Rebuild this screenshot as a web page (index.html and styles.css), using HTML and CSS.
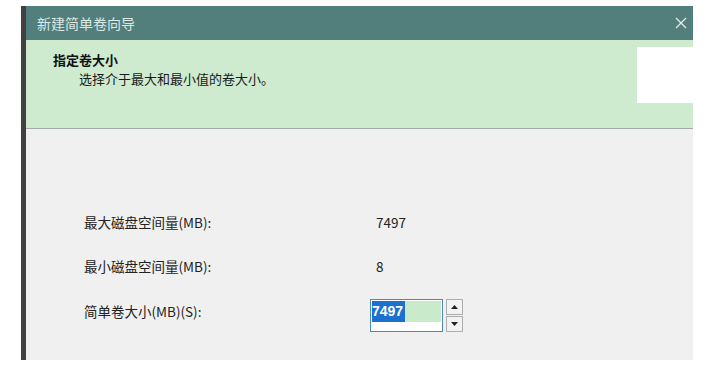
FILE: index.html
```html
<!DOCTYPE html>
<html lang="zh-CN">
<head>
<meta charset="utf-8">
<link rel="stylesheet" href="styles.css">
</head>
<body>
<div class="window">
  <div class="titlebar">
    <span class="title">新建简单卷向导</span>
    <svg class="close" width="12" height="12" viewBox="0 0 12 12"><path d="M1 1L11 11M11 1L1 11" stroke="#e3eeec" stroke-width="1.3" fill="none"/></svg>
  </div>
  <div class="header">
    <div class="htext">
      <div class="heading">指定卷大小</div>
      <div class="sub">选择介于最大和最小值的卷大小。</div>
    </div>
    <div class="logo"></div>
  </div>
  <div class="content">
    <div class="form">
      <div class="label">最大磁盘空间量(MB):</div>
      <div class="value">7497</div>
      <div class="label">最小磁盘空间量(MB):</div>
      <div class="value">8</div>
      <div class="label l3">简单卷大小(MB)(S):</div>
      <div class="spin">
        <div class="input">
          <div class="line"><span class="sel">7497</span><span class="fill"></span></div>
        </div>
        <div class="btns">
          <div class="btn"><svg width="7" height="4" viewBox="0 0 7 4"><path d="M0 4L3.5 0L7 4Z" fill="#222"/></svg></div>
          <div class="btn"><svg width="7" height="4" viewBox="0 0 7 4"><path d="M0 0L3.5 4L7 0Z" fill="#222"/></svg></div>
        </div>
      </div>
    </div>
  </div>
</div>
</body>
</html>
```
FILE: styles.css
```css
html, body { margin: 0; padding: 0; background: #fff; }
body {
  font-family: "Noto Sans CJK SC", "Microsoft YaHei", sans-serif;
  width: 707px; height: 380px; overflow: hidden;
}
.window {
  margin: 6px 0 0 21px;
  width: 667px;
  height: 354px;
  border-left: 5px solid #414141;
  display: flex;
  flex-direction: column;
}
.titlebar {
  height: 34px;
  background: #527e7b;
  display: flex;
  align-items: center;
  justify-content: space-between;
  padding: 0 6px 0 11px;
  box-sizing: border-box;
}
.title { color: #dbe9e6; font-size: 14px; line-height: 1; }
.close { display: block; }
.header {
  height: 88px;
  background: #ceebd0;
  border-bottom: 1px solid #a3aca4;
  display: flex;
  justify-content: space-between;
  align-items: flex-start;
}
.htext { padding: 10px 0 0 27px; }
.heading { font-size: 13px; font-weight: bold; color: #111; line-height: 19px; }
.sub { font-size: 13px; color: #1a1a1a; line-height: 19px; padding-left: 26px; }
.logo { width: 56px; height: 56px; background: #fff; margin-top: 7px; }
.content {
  flex: 1;
  background: #f0f0f0;
  padding: 82px 0 0 58px;
}
.form {
  display: grid;
  grid-template-columns: 286px auto;
  grid-template-rows: 22px 22px 34px;
  row-gap: 22px;
  align-items: center;
  font-size: 13.5px;
  color: #222;
}
.label { font-size: 13.5px; }
.value { padding-left: 6px; }
.l3 { align-self: start; margin-top: 2px; }
.spin { display: flex; gap: 3px; align-self: start; }
.input {
  width: 73px; height: 33px;
  box-sizing: border-box;
  border: 1px solid #4f87bd;
  background: #fff;
  padding: 1px;
}
.line { display: flex; height: 21px; }
.sel {
  background: #1c70d0; color: #fff;
  font-family: "Liberation Sans", Arial, sans-serif;
  font-weight: bold; font-size: 14px; line-height: 21px;
  padding: 0 2px 0 0;
}
.fill { flex: 1; background: #c9ebcb; }
.btns { display: flex; flex-direction: column; gap: 1px; }
.btn {
  width: 17px; height: 16px; box-sizing: border-box;
  border: 1px solid #adadad; background: #f2f2f2;
  display: flex; align-items: center; justify-content: center;
}
```
